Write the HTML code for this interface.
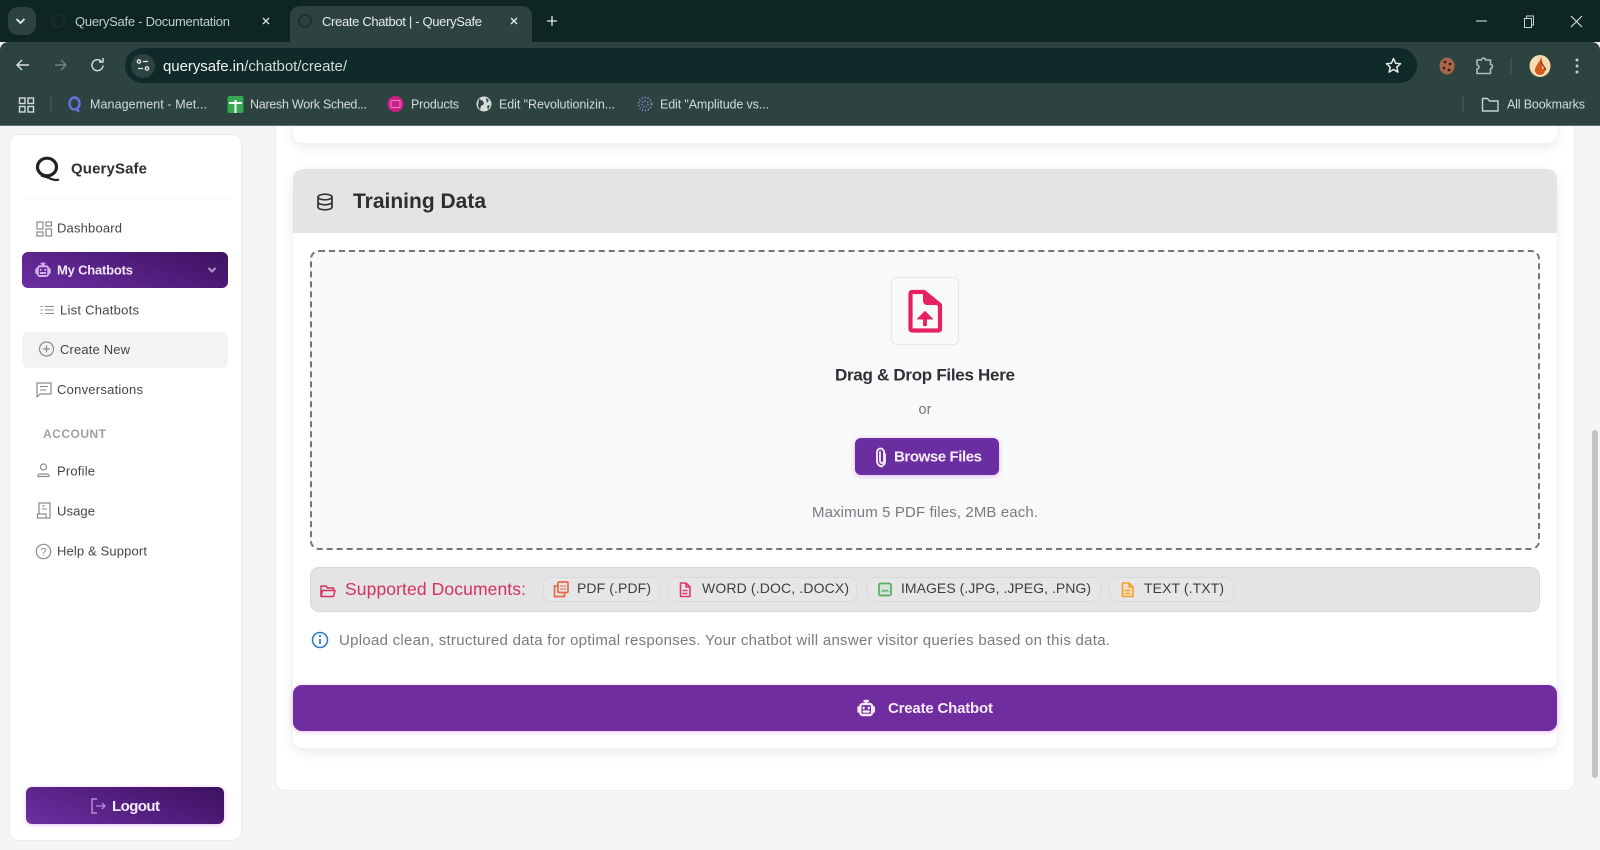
<!DOCTYPE html>
<html lang="en">
<head>
<meta charset="utf-8">
<title>Create Chatbot | - QuerySafe</title>
<style>
html,body{margin:0;padding:0;width:1600px;height:850px;overflow:hidden;background:#f5f5f5;font-family:"Liberation Sans",sans-serif}
.b{position:absolute;box-sizing:border-box}
svg{position:absolute;left:0;top:0}
text{font-family:"Liberation Sans",sans-serif}
</style>
</head>
<body>
<!-- page -->
<div class="b" style="left:275px;top:100px;width:1300px;height:691px;background:#fff;border:1px solid #ececec;border-radius:10px"></div>
<div class="b" style="left:293px;top:100px;width:1264px;height:43px;background:#fff;border-radius:10px;box-shadow:0 4px 12px rgba(0,0,0,.09)"></div>
<div class="b" style="left:293px;top:169px;width:1264px;height:579px;background:#fff;border-radius:10px;box-shadow:0 4px 12px rgba(0,0,0,.09)"></div>
<div class="b" style="left:293px;top:169px;width:1264px;height:64px;background:#e4e4e4;border-radius:10px 10px 0 0"></div>
<div class="b" style="left:310px;top:250px;width:1230px;height:300px;background:#f8f9fb;border:2px dashed #757575;border-radius:9px"></div>
<div class="b" style="left:891px;top:277px;width:68px;height:68px;background:#fafafb;border:1px solid #e6e6e8;border-radius:6px"></div>
<div class="b" style="left:855px;top:438px;width:144px;height:37px;background:#6a2ea0;border-radius:6px;box-shadow:0 1px 5px rgba(190,90,230,.45)"></div>
<div class="b" style="left:310px;top:567px;width:1230px;height:45px;background:#e4e4e4;border:1px solid #d8d8d8;border-radius:9px"></div>
<div class="b" style="left:543px;top:577px;width:117px;height:25px;background:#e6e6e6;border:1px solid #dadada;border-radius:8px"></div>
<div class="b" style="left:668px;top:577px;width:189px;height:25px;background:#e6e6e6;border:1px solid #dadada;border-radius:8px"></div>
<div class="b" style="left:867px;top:577px;width:234px;height:25px;background:#e6e6e6;border:1px solid #dadada;border-radius:8px"></div>
<div class="b" style="left:1109px;top:577px;width:125px;height:25px;background:#e6e6e6;border:1px solid #dadada;border-radius:8px"></div>
<div class="b" style="left:293px;top:685px;width:1264px;height:46px;background:#6f2da0;border-radius:9px;box-shadow:0 1px 5px rgba(190,90,230,.4)"></div>
<div class="b" style="left:1592px;top:430px;width:6px;height:348px;background:#c4c4c4;border-radius:3px"></div>
<!-- sidebar -->
<div class="b" style="left:9px;top:134px;width:233px;height:707px;background:#fff;border:1px solid #ececec;border-radius:10px"></div>
<div class="b" style="left:23px;top:198px;width:209px;height:1px;background:#f5f5f5"></div>
<div class="b" style="left:22px;top:252px;width:206px;height:36px;border-radius:6px;background:linear-gradient(20deg,#6c2fa2,#3d1160)"></div>
<div class="b" style="left:22px;top:332px;width:206px;height:36px;border-radius:6px;background:#f3f3f3"></div>
<div class="b" style="left:26px;top:787px;width:198px;height:37px;border-radius:6px;background:linear-gradient(20deg,#6c2fa2,#3d1160);box-shadow:0 1px 5px rgba(190,90,230,.4)"></div>
<!-- chrome -->
<div class="b" style="left:0;top:0;width:1600px;height:42px;background:#0d2624"></div>
<div class="b" style="left:0;top:42px;width:1600px;height:84px;background:#2c4340;border-bottom:1px solid #5f7270;border-radius:8px 8px 0 0"></div>
<div class="b" style="left:8px;top:7px;width:28px;height:28px;background:#2c4340;border-radius:10px"></div>
<div class="b" style="left:290px;top:6px;width:242px;height:38px;background:#2c4340;border-radius:10px 10px 0 0"></div>
<div class="b" style="left:125px;top:48px;width:1292px;height:35px;background:#0f2a28;border-radius:18px"></div>
<div class="b" style="left:131px;top:54px;width:24px;height:24px;background:#2c4340;border-radius:50%"></div>

<svg width="1600" height="850" viewBox="0 0 1600 850" xmlns="http://www.w3.org/2000/svg">
<defs>
<g id="robot" fill="none" stroke-linecap="round" stroke-linejoin="round">
  <rect x="5" y="7" width="14" height="13" rx="3"/>
  <path d="M12 7V4M10 3.500h4M5 11H3v5h2M19 11h2v5h-2M9 16h6"/>
  <path d="M9 11.500v.5M15 11.500v.5"/>
</g>
</defs>

<!-- tab strip -->
<path d="M16.500 19l4 4 4-4" fill="none" stroke="#e6ecea" stroke-width="1.800"/>
<circle cx="58" cy="21" r="6" fill="none" stroke="#1e2b2a" stroke-width="2"/>
<text x="75" y="26" font-size="13" fill="#c3ccca" textLength="155" lengthAdjust="spacing">QuerySafe - Documentation</text>
<path d="M263 18l6 6M269 18l-6 6" stroke="#d9e0de" stroke-width="1.300"/>
<circle cx="305" cy="21" r="6" fill="none" stroke="#1f2e2c" stroke-width="1.800"/>
<text x="322" y="26" font-size="13" fill="#e6ecea" textLength="160" lengthAdjust="spacing">Create Chatbot | - QuerySafe</text>
<path d="M511 18l6 6M517 18l-6 6" stroke="#e6ecea" stroke-width="1.300"/>
<path d="M552 16v10M547 21h10" stroke="#e6ecea" stroke-width="1.300"/>
<path d="M1476 21h11" stroke="#e6ecea" stroke-width="1"/>
<path d="M1524.500 18.500h7v9h-7zM1526.500 18.500v-2.500h7v9h-2" fill="none" stroke="#c9d2d0" stroke-width="1"/>
<path d="M1571 16l11 11M1582 16l-11 11" stroke="#e6ecea" stroke-width="1"/>

<!-- toolbar -->
<path d="M29 65H17M22 60l-5 5 5 5" fill="none" stroke="#d8e0de" stroke-width="1.400"/>
<path d="M55 65h11M61 60l5 5-5 5" fill="none" stroke="#71827f" stroke-width="1.400"/>
<path d="M103 65.500a5.500 5.500 0 1 1-1.800-4.400M103 58v4h-4" fill="none" stroke="#d8e0de" stroke-width="1.400"/>
<g fill="none" stroke="#e4eae8" stroke-width="1.300"><circle cx="139" cy="61.500" r="1.700"/><path d="M143 61.500h5M138 68.500h5"/><circle cx="147" cy="68.500" r="1.700"/></g>
<text x="163" y="71" font-size="15" fill="#f2f5f4" textLength="184" lengthAdjust="spacing">querysafe.in<tspan fill="#d2dad8">/chatbot/create/</tspan></text>
<path d="M1393.500 58.500l2.100 4.700 5 .5-3.800 3.400 1.100 5-4.400-2.600-4.400 2.600 1.100-5-3.800-3.400 5-.5z" fill="none" stroke="#e6ecea" stroke-width="1.500" stroke-linejoin="round"/>
<ellipse cx="1447" cy="66" rx="7.500" ry="8.500" fill="#a8654a"/>
<g fill="#2c1a12"><circle cx="1445" cy="62" r="1.300"/><circle cx="1450" cy="64" r="1.300"/><circle cx="1444" cy="68" r="1.300"/><circle cx="1449" cy="70" r="1.400"/></g>
<path d="M1477 60h4.500a2 2 0 0 1 4 0h5v4.500a2 2 0 0 1 0 4v5h-13.500v-4.500a2 2 0 0 0 0-4z" fill="none" stroke="#a9c0bc" stroke-width="1.600" stroke-linejoin="round"/>
<path d="M1511 58v16" stroke="#46605c" stroke-width="1"/>
<ellipse cx="1540" cy="66" rx="10.500" ry="11" fill="#f6dcae"/>
<path d="M1541 57c-1 5-6 9-6 13 0 3 2 5 5 5s5-2 5-5c0-2-2-2-3-1 0-4 1-8-1-12z" fill="#d55a1f"/>
<path d="M1541 62l5 8" stroke="#8a3010" stroke-width="1.300"/>
<g fill="#c5d0cd"><circle cx="1577" cy="60" r="1.500"/><circle cx="1577" cy="66" r="1.500"/><circle cx="1577" cy="72" r="1.500"/></g>

<!-- bookmarks -->
<g fill="none" stroke="#d5dcda" stroke-width="1.400"><rect x="19.500" y="98" width="5.500" height="5.500"/><rect x="28" y="98" width="5.500" height="5.500"/><rect x="19.500" y="106.500" width="5.500" height="5.500"/><rect x="28" y="106.500" width="5.500" height="5.500"/></g>
<path d="M51 97v14" stroke="#4b6360" stroke-width="1"/>
<ellipse cx="74.500" cy="103.500" rx="5" ry="6" fill="none" stroke="#6273e0" stroke-width="2.400"/>
<path d="M76 108l3 4" stroke="#6273e0" stroke-width="2.400"/>
<text x="90" y="108.500" font-size="12.500" fill="#d5dcda" textLength="117" lengthAdjust="spacing">Management - Met...</text>
<rect x="227.500" y="96" width="16" height="17" rx="2" fill="#34a853"/>
<path d="M235.500 100v13M229 103h13" stroke="#fff" stroke-width="2"/>
<text x="250" y="108.500" font-size="12.500" fill="#d5dcda" textLength="117" lengthAdjust="spacing">Naresh Work Sched...</text>
<circle cx="395.500" cy="104" r="8" fill="#cf1f88"/>
<rect x="391" y="100.500" width="9" height="7" rx="1" fill="none" stroke="#e985c0" stroke-width="1"/>
<text x="411" y="108.500" font-size="12.500" fill="#d5dcda" textLength="48" lengthAdjust="spacing">Products</text>
<circle cx="484" cy="104" r="7.500" fill="#d5dcda"/>
<path d="M479 99l4 2 1 3-3 2-1 4-2-4zM486 98l3 2-2 3zM487 106l3-1-2 5z" fill="#2c4340"/>
<text x="499" y="108.500" font-size="12.500" fill="#d5dcda" textLength="116" lengthAdjust="spacing">Edit "Revolutionizin...</text>
<circle cx="645" cy="104" r="6.500" fill="none" stroke="#8f88cc" stroke-width="1.800" stroke-dasharray="1.200 1.800"/>
<circle cx="645" cy="104" r="3" fill="none" stroke="#8f88cc" stroke-width="1.500" stroke-dasharray="1.200 1.500"/>
<text x="660" y="108.500" font-size="12.500" fill="#d5dcda" textLength="109" lengthAdjust="spacing">Edit "Amplitude vs...</text>
<path d="M1463 96v16" stroke="#4b6360" stroke-width="1"/>
<path d="M1482.500 98.500h5l2 2.500h8.500v10h-15.500z" fill="none" stroke="#c9d3d0" stroke-width="1.400" stroke-linejoin="round"/>
<text x="1507" y="108.500" font-size="12.500" fill="#d5dcda" textLength="78" lengthAdjust="spacing">All Bookmarks</text>

<!-- sidebar -->
<ellipse cx="47" cy="167" rx="9.500" ry="8.800" fill="none" stroke="#222" stroke-width="3.200"/>
<path d="M41 175.500c3 1 6 1.500 9 3s6 2 9 1" fill="none" stroke="#222" stroke-width="2.200"/>
<text x="71" y="173.500" font-size="15" font-weight="700" fill="#2f2f33" textLength="76" lengthAdjust="spacing">QuerySafe</text>

<g fill="none" stroke="#8a8a8a" stroke-width="1.200"><rect x="37" y="222" width="6" height="7"/><rect x="46" y="222" width="5.500" height="4"/><rect x="37" y="232" width="6" height="4"/><rect x="46" y="229" width="5.500" height="7"/></g>
<text x="57" y="232.500" font-size="13" fill="#454548" textLength="65" lengthAdjust="spacing">Dashboard</text>

<use href="#robot" transform="translate(34,261) scale(.75)" stroke="#d4b3ec" stroke-width="2.600"/>
<text x="57" y="274.500" font-size="13" font-weight="700" fill="#f2e6fb" textLength="76" lengthAdjust="spacing">My Chatbots</text>
<path d="M208.500 268l3.500 3.500 3.500-3.500" fill="none" stroke="#b595cf" stroke-width="2"/>

<path d="M45 306.500h9M45 310h9M45 313.500h9M40.500 306.500h2M40.500 310h2M40.500 313.500h2" stroke="#8a8a8a" stroke-width="1.100"/>
<text x="60" y="314.500" font-size="13" fill="#454548" textLength="79" lengthAdjust="spacing">List Chatbots</text>

<circle cx="46.500" cy="349" r="7" fill="none" stroke="#8a8a8a" stroke-width="1.200"/>
<path d="M46.500 345.500v7M43 349h7" stroke="#8a8a8a" stroke-width="1.200"/>
<text x="60" y="354" font-size="13" fill="#454548" textLength="70" lengthAdjust="spacing">Create New</text>

<path d="M37 383h14v11H40l-3 3z" fill="none" stroke="#8a8a8a" stroke-width="1.200" stroke-linejoin="round"/>
<path d="M40 386.500h8M40 390h6" stroke="#8a8a8a" stroke-width="1.100"/>
<text x="57" y="394" font-size="13" fill="#454548" textLength="86" lengthAdjust="spacing">Conversations</text>

<text x="43" y="438" font-size="12" font-weight="700" fill="#a0a0a0" textLength="63" lengthAdjust="spacing">ACCOUNT</text>

<circle cx="43.500" cy="467" r="3" fill="none" stroke="#8a8a8a" stroke-width="1.200"/>
<path d="M38 476.500a2 2 0 0 1 2-2.500h7a2 2 0 0 1 2 2.500z" fill="none" stroke="#8a8a8a" stroke-width="1.200" stroke-linejoin="round"/>
<text x="57" y="475.500" font-size="13" fill="#454548" textLength="38" lengthAdjust="spacing">Profile</text>

<path d="M39 514v-11h11v15h-12.500v-4zM37.500 514H46v4" fill="none" stroke="#8a8a8a" stroke-width="1.200"/>
<path d="M42 506h3M42 509h5" stroke="#8a8a8a" stroke-width="1"/>
<text x="57" y="515.500" font-size="13" fill="#454548" textLength="38" lengthAdjust="spacing">Usage</text>

<circle cx="43.500" cy="551.500" r="7.200" fill="none" stroke="#8a8a8a" stroke-width="1.200"/>
<text x="43.500" y="555.500" font-size="11" fill="#8a8a8a" text-anchor="middle">?</text>
<text x="57" y="555.500" font-size="13" fill="#454548" textLength="90" lengthAdjust="spacing">Help &amp; Support</text>

<path d="M97 799h-5v14h5" fill="none" stroke="#b98ad8" stroke-width="1.500"/>
<path d="M96 806h9M102 803l3 3-3 3" fill="none" stroke="#b98ad8" stroke-width="1.300"/>
<text x="112" y="811" font-size="15" font-weight="700" fill="#f5ebfc" textLength="48" lengthAdjust="spacing">Logout</text>

<!-- header -->
<g fill="none" stroke="#333" stroke-width="1.700">
<ellipse cx="325" cy="197" rx="7" ry="2.800"/>
<path d="M318 197v10c0 1.600 3 2.800 7 2.800s7-1.200 7-2.800v-10M318 202c0 1.600 3 2.800 7 2.800s7-1.200 7-2.800"/>
</g>
<text x="353" y="208" font-size="21" font-weight="700" fill="#2e2e32" textLength="133" lengthAdjust="spacing">Training Data</text>

<!-- dropzone -->
<path d="M912 292h12l16 13v24a1.500 1.500 0 0 1-1.500 1.500h-26.500a1.500 1.500 0 0 1-1.500-1.500v-35.500a1.500 1.500 0 0 1 1.500-1.500z" fill="none" stroke="#e5225f" stroke-width="4.200" stroke-linejoin="round"/>
<path d="M923 290l19 15h-15a4 4 0 0 1-4-4z" fill="#e5225f"/>
<path d="M925 326v-11" fill="none" stroke="#e5225f" stroke-width="3.800"/>
<path d="M917.500 319l7.500-7.500 7.500 7.500z" fill="#e5225f" stroke="#e5225f" stroke-linejoin="round"/>
<text x="835" y="380.500" font-size="17" font-weight="700" fill="#303034" textLength="180" lengthAdjust="spacing">Drag &amp; Drop Files Here</text>
<text x="925" y="414" font-size="14.500" fill="#777" text-anchor="middle">or</text>
<path d="M879 453v9a2 2 0 0 0 4 0v-9a3.500 3.500 0 0 0-7 0v9a5.500 5.500 0 0 0 5 5.500M884 455v7.500a4 4 0 0 1-2.500 4" fill="none" stroke="#f2e6fb" stroke-width="1.900" stroke-linecap="round" transform="translate(1,-1)"/>
<text x="894" y="461.500" font-size="15" font-weight="700" fill="#f7effc" textLength="88" lengthAdjust="spacing">Browse Files</text>
<text x="812" y="517" font-size="15" fill="#7a7a7e" textLength="226" lengthAdjust="spacing">Maximum 5 PDF files, 2MB each.</text>

<!-- supported -->
<path d="M321 596.500v-10.500h5l1.500 2h6v2.500M321 596.500l1.500-6h12.500l-1.500 6z" fill="none" stroke="#d83060" stroke-width="1.500" stroke-linejoin="round"/>
<text x="345" y="595" font-size="17.500" fill="#d5305f" textLength="181" lengthAdjust="spacing">Supported Documents:</text>

<g fill="none" stroke="#e8684a" stroke-width="1.700"><rect x="558" y="582" width="10" height="10.500" rx="1"/><path d="M558 586h-3.500v10.500h10v-3"/></g>
<path d="M560 586h6M560 589h6" stroke="#e8684a" stroke-width="1"/>
<text x="577" y="593" font-size="14" fill="#3e3e42" textLength="74" lengthAdjust="spacing">PDF (.PDF)</text>
<path d="M680.500 583h5.500l4 4v9.500h-9.500zM686 583v4h4M682.500 590.500h5M682.500 593.500h5" fill="none" stroke="#e03a6a" stroke-width="1.600" stroke-linejoin="round"/>
<text x="702" y="593" font-size="14" fill="#3e3e42" textLength="147" lengthAdjust="spacing">WORD (.DOC, .DOCX)</text>
<rect x="879" y="583.500" width="12" height="12" rx="1.500" fill="#d8e4d8" stroke="#55ad60" stroke-width="1.700"/>
<path d="M881.500 592l2-2 1.500 1.500 1.500-1.500 2 2" fill="none" stroke="#55ad60" stroke-width="1"/>
<text x="901" y="593" font-size="14" fill="#3e3e42" textLength="190" lengthAdjust="spacing">IMAGES (.JPG, .JPEG, .PNG)</text>
<path d="M1122.500 583h6.500l4 4v9.500h-10.500zM1129 583v4h4M1124.500 590.500h6M1124.500 593.500h6" fill="#f6e2c4" stroke="#f0a030" stroke-width="1.600" stroke-linejoin="round"/>
<text x="1144" y="593" font-size="14" fill="#3e3e42" textLength="80" lengthAdjust="spacing">TEXT (.TXT)</text>

<circle cx="320" cy="640" r="7.500" fill="none" stroke="#2f7cc4" stroke-width="1.600"/>
<path d="M320 639v5" stroke="#2f7cc4" stroke-width="1.800"/><circle cx="320" cy="636" r="1.100" fill="#2f7cc4"/>
<text x="339" y="645" font-size="15" fill="#7a7a7e" textLength="771" lengthAdjust="spacing">Upload clean, structured data for optimal responses. Your chatbot will answer visitor queries based on this data.</text>

<!-- create -->
<use href="#robot" transform="translate(856,698) scale(.85)" stroke="#f6ecfc" stroke-width="2.800"/>
<text x="888" y="713" font-size="15" font-weight="700" fill="#f5ebfc" textLength="105" lengthAdjust="spacing">Create Chatbot</text>
</svg>
</body>
</html>
